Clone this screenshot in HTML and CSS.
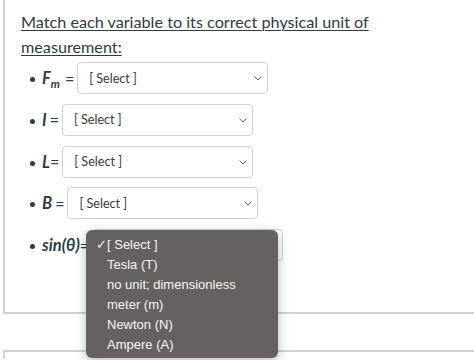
FILE: index.html
```html
<!DOCTYPE html>
<html>
<head>
<meta charset="utf-8">
<link rel="stylesheet" href="styles.css">
</head>
<body>
<div class="question">
  <p class="title">Match each variable to its correct physical unit of measurement:</p>
  <ul class="list">
    <li class="row"><span class="label">F<sub>m</sub></span><span class="eq sp">=</span><div class="select"><span>[ Select ]</span><svg class="chev" width="8" height="5" viewBox="0 0 8 5"><path d="M0.5 0.5 L4 4 L7.5 0.5" fill="none" stroke="#666" stroke-width="1"/></svg></div></li>
    <li class="row"><span class="label">I</span><span class="eq sp">=</span><div class="select"><span>[ Select ]</span><svg class="chev" width="8" height="5" viewBox="0 0 8 5"><path d="M0.5 0.5 L4 4 L7.5 0.5" fill="none" stroke="#666" stroke-width="1"/></svg></div></li>
    <li class="row"><span class="label">L</span><span class="eq">=</span><div class="select"><span>[ Select ]</span><svg class="chev" width="8" height="5" viewBox="0 0 8 5"><path d="M0.5 0.5 L4 4 L7.5 0.5" fill="none" stroke="#666" stroke-width="1"/></svg></div></li>
    <li class="row"><span class="label">B</span><span class="eq sp">=</span><div class="select"><span>[ Select ]</span><svg class="chev" width="8" height="5" viewBox="0 0 8 5"><path d="M0.5 0.5 L4 4 L7.5 0.5" fill="none" stroke="#666" stroke-width="1"/></svg></div></li>
    <li class="row open"><span class="label">sin(θ)</span><span class="eq">=</span><div class="select"><span class="hidden">[ Select ]</span><svg class="chev" width="8" height="5" viewBox="0 0 8 5"><path d="M0.5 0.5 L4 4 L7.5 0.5" fill="none" stroke="#666" stroke-width="1"/></svg></div>
      <div class="popup">
        <div class="opt"><span class="check">✓</span>[ Select ]</div>
        <div class="opt">Tesla (T)</div>
        <div class="opt">no unit; dimensionless</div>
        <div class="opt">meter (m)</div>
        <div class="opt">Newton (N)</div>
        <div class="opt">Ampere (A)</div>
      </div>
    </li>
  </ul>
</div>
<div class="next"></div>
</body>
</html>
```
FILE: styles.css
```css
html, body {
  margin: 0;
  padding: 0;
  background: #ffffff;
  overflow: hidden;
}
body {
  width: 474px;
  height: 360px;
  font-family: Lato, "Open Sans", sans-serif;
  color: #2d3b45;
}
.question {
  margin-left: 3px;
  border-left: 2px solid #d2d2d2;
  border-bottom: 2px solid #d2d2d2;
  padding: 9px 0 51px 16px;
}
.title {
  margin: 0;
  font-size: 16.2px;
  line-height: 25px;
  text-decoration: underline;
  text-decoration-thickness: 1px;
  text-underline-offset: 2px;
  width: 390px;
}
.list {
  list-style: none;
  margin: 3px 0 0 0;
  padding: 0 0 0 9px;
}
.row {
  display: flex;
  align-items: center;
  height: 32px;
  margin-bottom: 9.75px;
  position: relative;
}
.row:last-child { margin-bottom: 0; }
.row::before {
  content: "";
  width: 5px;
  height: 5px;
  border-radius: 50%;
  background: #2d3b45;
  margin-right: 7px;
  margin-top: 3px;
}
.label {
  font-weight: 700;
  font-style: italic;
  font-size: 16.5px;
}
.label sub {
  font-size: 11.5px;
  vertical-align: -4px;
  line-height: 0;
  margin-right: 2px;
}
.eq {
  font-size: 16px;
  margin-right: 3px;
}
.eq.sp { margin-left: 3px; }
.select {
  width: 191px;
  height: 32px;
  box-sizing: border-box;
  border: 1px solid #cfd3d6;
  border-radius: 4px;
  background: #fff;
  display: flex;
  align-items: center;
  justify-content: space-between;
  padding: 0 5px 0 11px;
  font-size: 12.6px;
  color: #3a3a3a;
}
.hidden { visibility: hidden; }
.chev { margin-top: 1px; }
.popup {
  position: absolute;
  left: 56px;
  top: 1px;
  width: 192px;
  height: 128px;
  box-sizing: border-box;
  background: #646160;
  border-radius: 6px;
  box-shadow: 0 3px 12px rgba(0, 0, 0, 0.28);
  padding-top: 5px;
  font-family: "Liberation Sans", Arial, sans-serif;
  font-size: 13px;
  color: #f6f6f6;
}
.opt {
  height: 20px;
  line-height: 20px;
  padding-left: 21px;
  position: relative;
}
.check {
  position: absolute;
  left: 10px;
  top: 0;
  font-size: 13px;
}
.next {
  margin: 36px 0 0 3px;
  border-left: 2px solid #d2d2d2;
  border-top: 2px solid #d2d2d2;
  height: 7px;
}
```
